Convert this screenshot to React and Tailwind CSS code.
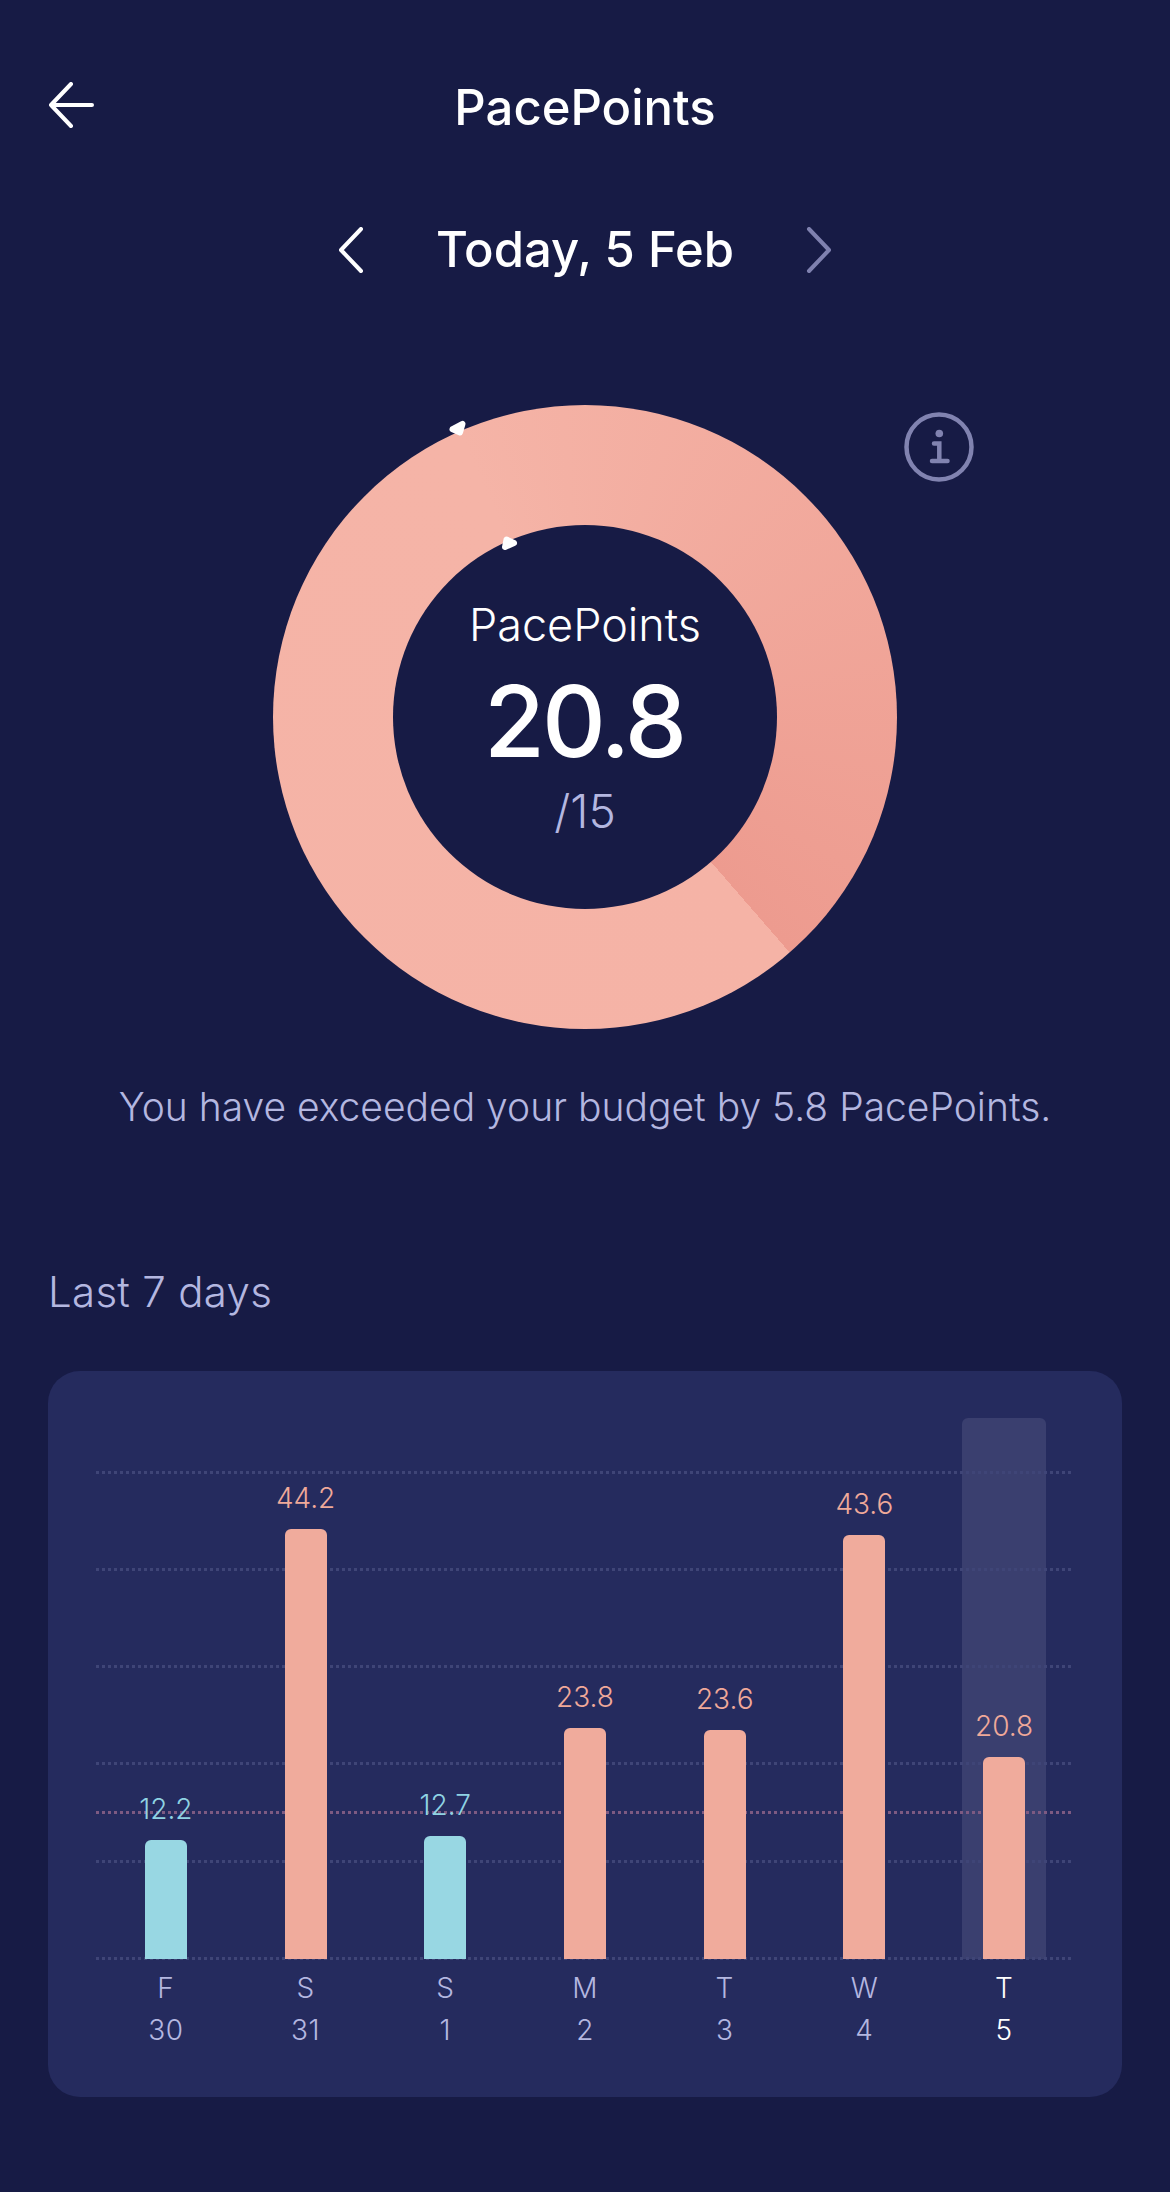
import React from "react";

const days = [
  { day: "F", date: "30", value: 12.2 },
  { day: "S", date: "31", value: 44.2 },
  { day: "S", date: "1", value: 12.7 },
  { day: "M", date: "2", value: 23.8 },
  { day: "T", date: "3", value: 23.6 },
  { day: "W", date: "4", value: 43.6 },
  { day: "T", date: "5", value: 20.8, today: true },
];

const LIMIT = 15;
const PX_PER_POINT = 9.72;
const gridLines = [0, 97.3, 194.6, 291.9, 389.2, 486.5];

function BackArrow() {
  return (
    <svg width="46" height="46" viewBox="0 0 46 46" fill="none" stroke="white" strokeWidth="4" strokeLinecap="round" strokeLinejoin="round">
      <path d="M44 23H3M23 2L3 23L23 44" />
    </svg>
  );
}

function Chevron({ right }) {
  return (
    <svg width="26" height="46" viewBox="0 0 26 46" fill="none" stroke={right ? "#7f81af" : "white"} strokeWidth="4" strokeLinecap="round" strokeLinejoin="round">
      <path d={right ? "M3 2L23 23L3 44" : "M23 2L3 23L23 44"} />
    </svg>
  );
}

function InfoIcon() {
  return (
    <svg width="70" height="70" viewBox="0 0 70 70" fill="none" stroke="#8183b0" strokeWidth="4.5" strokeLinecap="round">
      <circle cx="35" cy="35" r="32.5" />
      <circle cx="35.3" cy="21.5" r="3.8" fill="#8183b0" stroke="none" />
      <path d="M30 31.6H35.3V49M28 49H43.5" />
    </svg>
  );
}

function Markers() {
  return (
    <svg className="absolute inset-0" width="624" height="624" viewBox="0 0 624 624" fill="white" stroke="white" strokeWidth="6" strokeLinejoin="round">
      <path d="M179.5 24.2L189.5 19L187 27.5Z" />
      <path d="M241 138L233.5 134.5L232 142Z" />
    </svg>
  );
}

function Donut() {
  return (
    <div className="relative flex h-[624px] w-[624px] items-center justify-center rounded-full bg-[conic-gradient(from_-24deg,#f5b4a7_0deg,#ed9b8f_163deg,#f5b3a6_163deg,#f5b4a7_360deg)]">
      <div className="flex h-[384px] w-[384px] flex-col items-center rounded-full bg-[#171b45] pt-[74px]">
        <span className="text-[45px] leading-[52px] font-light text-white">PacePoints</span>
        <span className="mt-[15px] mr-[2px] text-[99px] leading-[110px] font-medium tracking-[-3px] text-white">20.8</span>
        <span className="mt-[8px] text-[46px] leading-[54px] font-light text-[#b4b7e0]">/15</span>
      </div>
      <Markers />
      <div className="absolute top-[7px] left-[631px]">
        <InfoIcon />
      </div>
    </div>
  );
}

function Bar({ item }) {
  const over = item.value > LIMIT;
  return (
    <div className="relative flex h-full flex-col items-center justify-end">
      <span className={`relative mb-[15px] text-[28px] leading-[32px] font-[350] ${over ? "text-[#f0a999]" : "text-[#8fd3e3]"}`}>
        {item.value}
      </span>
      <div
        className={`relative w-[42px] rounded-t-[6px] ${over ? "bg-[#f0ab9c]" : "bg-[#98d7e3]"}`}
        style={{ height: item.value * PX_PER_POINT }}
      />
    </div>
  );
}

function Chart() {
  return (
    <div className="rounded-[32px] bg-[#252b5e] px-[48px] pt-[47px]">
      <div className="relative h-[541px]">
        <div className="absolute inset-0 grid grid-cols-7">
          {days.map((d, i) => (
            <div key={i} className="relative h-full">
              {d.today && <div className="absolute inset-y-0 left-1/2 w-[84px] -translate-x-1/2 rounded-t-md bg-[#3a3f6f]" />}
            </div>
          ))}
        </div>
        {gridLines.map((b) => (
          <div
            key={b}
            className="absolute right-[3px] left-0 h-[3px] bg-[repeating-linear-gradient(90deg,#3f4577_0px,#3f4577_3px,transparent_3px,transparent_6px)]"
            style={{ bottom: b - 1 }}
          />
        ))}
        <div
          className="absolute right-[3px] left-0 h-[3px] bg-[repeating-linear-gradient(90deg,#7d5a82_0px,#7d5a82_3px,transparent_3px,transparent_6px)]"
          style={{ bottom: LIMIT * PX_PER_POINT - 1 }}
        />
        <div className="relative grid h-full grid-cols-7">
          {days.map((d, i) => (
            <Bar key={i} item={d} />
          ))}
        </div>
      </div>
      <div className="grid grid-cols-7 pt-[8px] pb-[46px] text-[28px] leading-[42px] font-[350] tracking-[0.5px] text-[#b4b7e0]">
        {days.map((d, i) => (
          <div key={i} className="flex flex-col items-center">
            <span className={d.today ? "text-white" : ""}>{d.day}</span>
            <span className={d.today ? "text-white" : ""}>{d.date}</span>
          </div>
        ))}
      </div>
    </div>
  );
}

export default function App() {
  return (
    <div className="h-[2192px] w-[1170px] overflow-hidden bg-[#171b45] px-[48px] pt-[78px] font-['Inter',sans-serif]">
      <div className="relative flex h-[60px] items-center justify-center">
        <div className="absolute top-[4px] left-0 flex">
          <BackArrow />
        </div>
        <h1 className="text-[49px] leading-[60px] font-medium text-white">PacePoints</h1>
      </div>
      <div className="mt-[82px] flex items-center justify-center">
        <Chevron />
        <span className="mx-[72px] text-[49px] leading-[60px] font-medium text-white">Today, 5 Feb</span>
        <Chevron right />
      </div>
      <div className="mt-[125px] flex justify-center">
        <Donut />
      </div>
      <p className="mt-[54px] text-center text-[39px] leading-[48px] font-[350] text-[#b4b7e0]">
        You have exceeded your budget by 5.8 PacePoints.
      </p>
      <h2 className="mt-[136px] text-[42px] leading-[50px] font-[350] tracking-[0.3px] text-[#b4b7e0]">Last 7 days</h2>
      <div className="mt-[54px]">
        <Chart />
      </div>
    </div>
  );
}
